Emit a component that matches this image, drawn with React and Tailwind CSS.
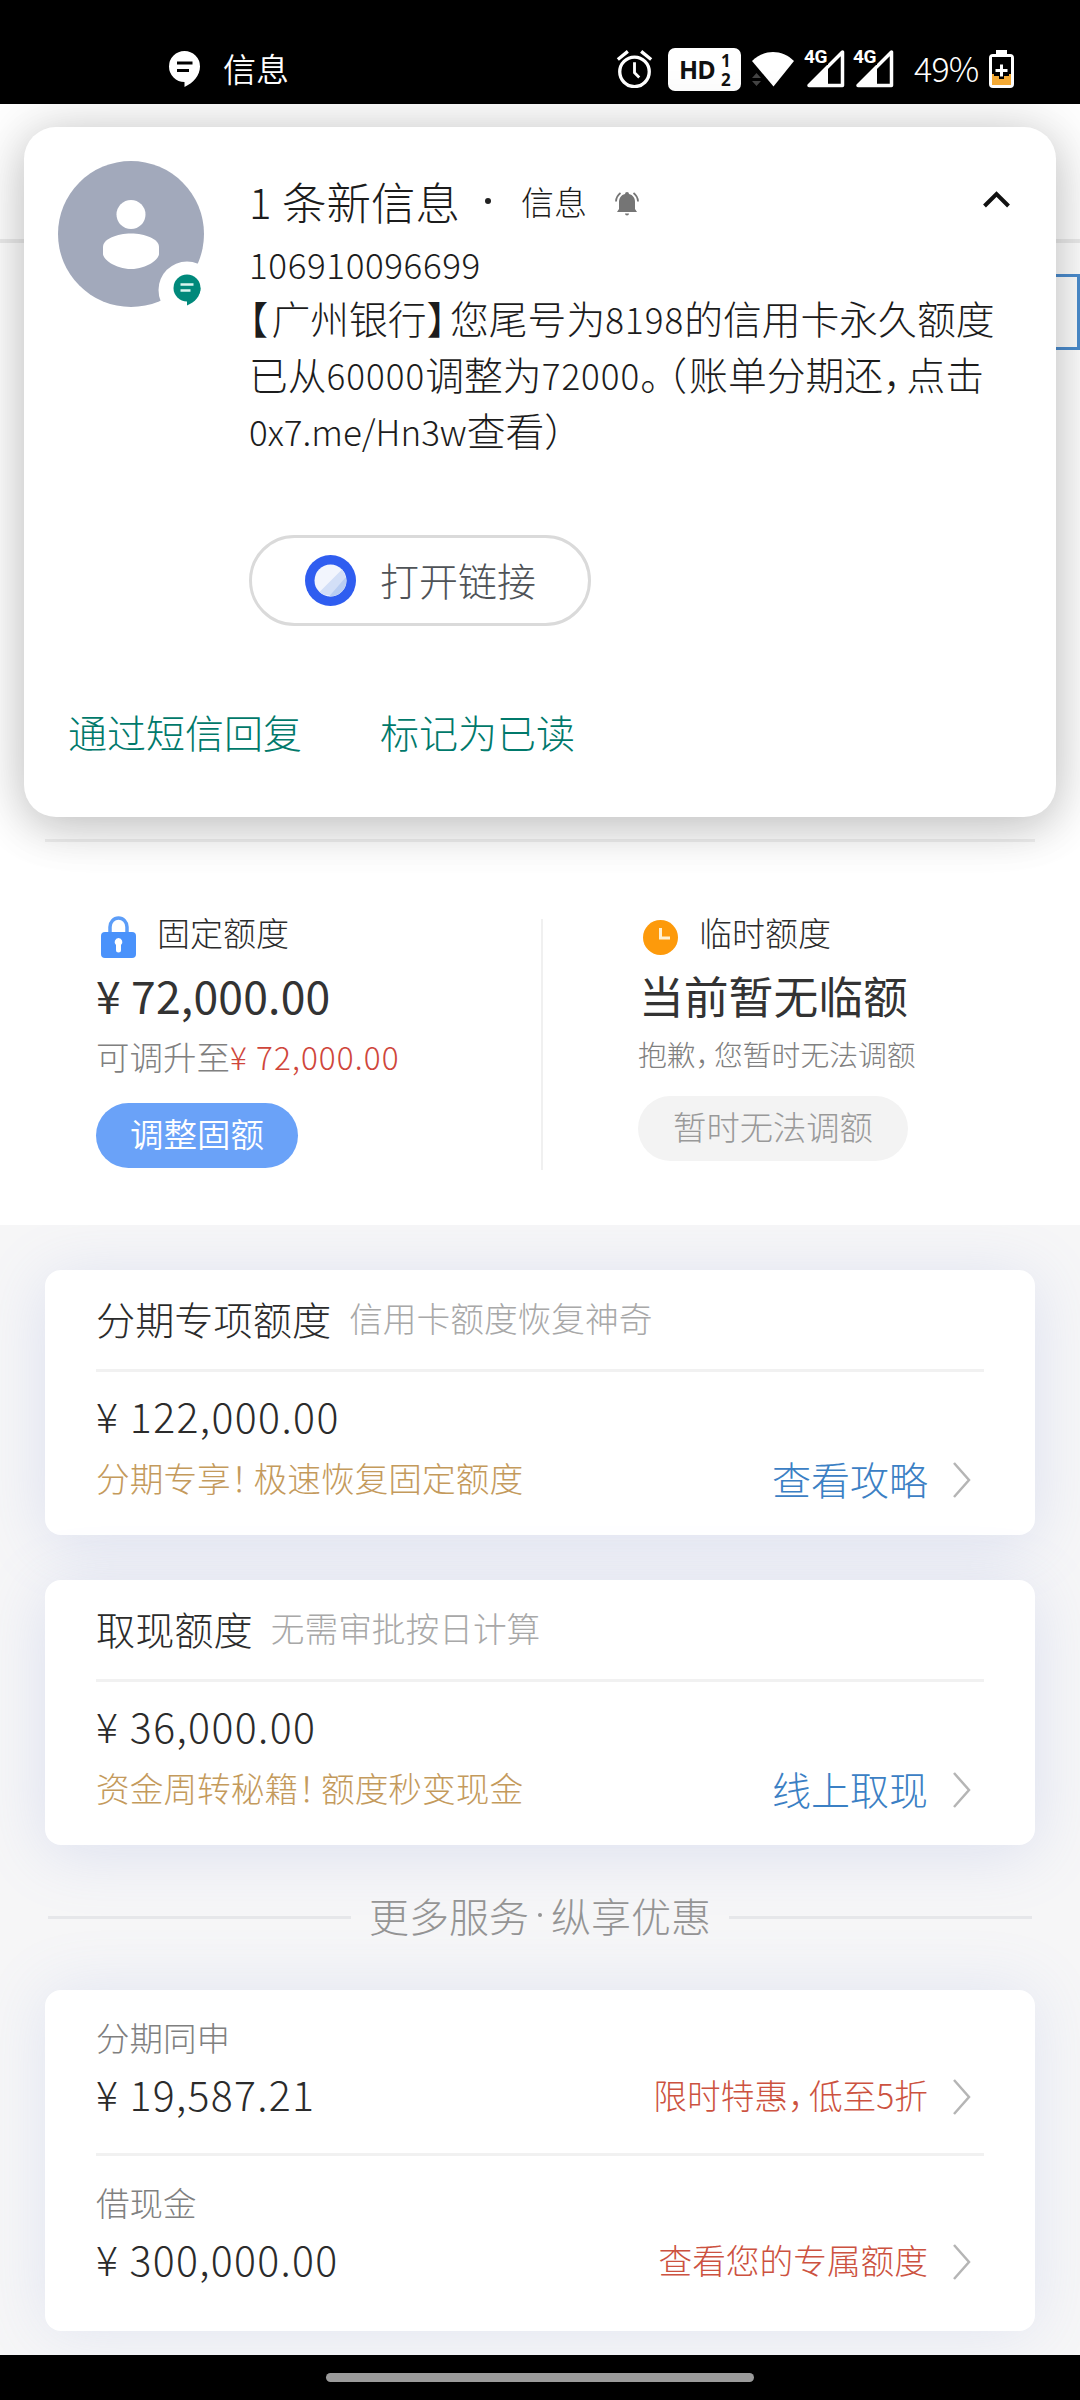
/**
 * App.jsx — credit limit page with an SMS heads-up notification on top
 */

const chevronPath = 'M2 1 L17 18 L2 35';

function ChatBubble({ className, lines }) {
  return (
    <svg className={className} viewBox="0 0 31 36">
      <path d="M15.5 0a15.5 15.5 0 0 1 15.5 15.5c0 9-7 16.500-15.500 20.500v-5A15.500 15.500 0 0 1 15.500 0z" fill="currentColor" />
      <path d="M8 12h15.500M8 19.500h12" stroke={lines} strokeWidth="3" />
    </svg>
  );
}

function SignalIcon() {
  return (
    <div className="relative h-[40px] w-[42px]">
      <svg className="h-full w-full" viewBox="0 0 42 40">
        <path d="M38.500 3v33.500H5z" fill="none" stroke="#fff" strokeWidth="3.500" strokeLinejoin="round" />
        <path d="M4 37.500 24 17v20.500z" fill="#fff" />
      </svg>
      <span className="absolute top-0 left-0 bg-black pr-px font-[Roboto] text-[19px] leading-[16px] font-bold tracking-[-0.500px] text-white">4G</span>
    </div>
  );
}

function StatusBar() {
  return (
    <header className="flex h-[104px] items-start bg-black pt-[48px] text-white">
      <ChatBubble className="mt-[3px] ml-[169px] h-[36px] w-[31px]" lines="#000" />
      <span className="ml-[23px] text-[33px] leading-[40px] font-[350]">信息</span>
      <svg className="ml-[327px] h-[40px] w-[37px] shrink-0" viewBox="0 0 38 42" fill="none" stroke="#fff" strokeWidth="3.500">
        <circle cx="19" cy="25" r="15.500" />
        <path d="M19 15v11l5 5" strokeWidth="3" />
        <path d="M1.500 12 12 3.500M26 3.500 36.500 12" />
      </svg>
      <div className="ml-[15px] flex h-[43px] w-[73px] items-center rounded-[7px] bg-white pl-[11px] font-['Open_Sans'] text-[25px] leading-none font-bold text-[#111]">
        <span className="w-[37px] tracking-[-1px]">HD</span>
        <span className="ml-[5px] flex flex-col text-[17px] leading-[19px]">
          <span>1</span>
          <span>2</span>
        </span>
      </div>
      <svg className="ml-[11px] h-[40px] w-[43px] shrink-0" viewBox="0 0 43 40">
        <path d="M0 13C12 1 30 1 42 13L21.500 38.500z" fill="#fff" />
        <path d="M0 30l4.500-5 4.500 5zM0 33h9l-4.500 5z" fill="#444" />
      </svg>
      <div className="mt-px ml-[9px] flex gap-[7px]">
        <SignalIcon />
        <SignalIcon />
      </div>
      <span className="mt-[-1px] ml-[19px] w-[67px] text-[34px] leading-[42px] font-light tracking-[-0.800px] whitespace-nowrap">49%</span>
      <svg className="mt-[2px] ml-[8px] h-[38px] w-[25px] shrink-0" viewBox="0 0 25 38">
        <path d="M7 0h11v4h3a4 4 0 0 1 4 4v26a4 4 0 0 1-4 4H4a4 4 0 0 1-4-4V8a4 4 0 0 1 4-4h3z" fill="#fff" />
        <path d="M3 7h19v17H3z" fill="#000" />
        <path d="M3 24h19v11H3z" fill="#f5ab35" />
        <path d="M9 14h7v4h4v8h-5v3h-5v-3H5v-8h4z" fill="#000" />
        <path d="M12.500 14.500v12M6.500 20.500h12" stroke="#fff" strokeWidth="3" />
      </svg>
    </header>
  );
}

function Avatar() {
  return (
    <svg className="h-[150px] w-[160px]" viewBox="0 0 160 150">
      <circle cx="73" cy="73" r="73" fill="#a2a9bb" />
      <circle cx="73" cy="53.500" r="14.500" fill="#fff" />
      <path d="M45 86c0-8 14-13.500 28-13.500S101 78 101 86v7c0 5-12 15-28 15S45 98 45 93z" fill="#fff" />
      <circle cx="129" cy="129" r="28.500" fill="#fff" />
      <circle cx="129" cy="127" r="13.500" fill="#00897b" />
      <path d="M129 139v5.500c8-3.500 13.500-9 13.500-18z" fill="#00897b" />
      <path d="M122.500 123.500h13M122.500 129.500h10" stroke="#d9f5f0" strokeWidth="2.500" />
    </svg>
  );
}

function Notification() {
  return (
    <section className="absolute top-[127px] left-[24px] h-[690px] w-[1032px] rounded-[32px] bg-white text-[#1c1c1c] shadow-[0_0_60px_rgba(0,0,0,0.160),0_14px_44px_rgba(0,0,0,0.140)]">
      <div className="flex">
        <div className="mt-[34px] ml-[34px] w-[191px] shrink-0">
          <Avatar />
        </div>
        <div className="w-[760px] pt-[44px]">
          <div className="flex h-[60px] items-center font-light whitespace-nowrap">
            <span className="w-[33px] text-[42px] leading-[60px]">1</span>
            <span className="text-[44.500px] leading-[60px]">条新信息</span>
            <span className="ml-[25px] size-[6px] rounded-full bg-[#212121]" />
            <span className="ml-[30px] text-[33px] leading-[60px]">信息</span>
            <svg className="mt-[5px] ml-[28px] h-[24px] w-[24px]" viewBox="0 0 24 24" fill="#757575">
              <path d="M12 0a2 2 0 0 1 2 2c4 1 6 4 6 8v7l2 3H2l2-3v-7c0-4 2-7 6-8a2 2 0 0 1 2-2zM10 21.500h4a2 2 0 0 1-4 0z" />
              <path d="M1 9.500C1 6 3 3 5.500 1M23 9.500C23 6 21 3 18.500 1" fill="none" stroke="#757575" strokeWidth="1.800" />
            </svg>
          </div>
          <p className="mt-[8px] text-[35px] leading-[50px] font-light tracking-[0.600px]">106910096699</p>
          <div className="text-[38.800px] font-light whitespace-nowrap">
            <p className="h-[56px] leading-[56px]">
              <span className="mr-[3px] [font-feature-settings:'halt']">【</span>广州银行<span className="mr-[4px] [font-feature-settings:'halt']">】</span>您尾号为<span className="text-[35px] leading-none tracking-[1px]">8198</span>的信用卡永久额度
            </p>
            <p className="h-[56px] leading-[56px]">
              已从<span className="text-[35px] leading-none tracking-[1px]">60000</span>调整为<span className="text-[35px] leading-none tracking-[1px]">72000</span>
              <span className="mr-[8px] [font-feature-settings:'halt']">。</span>
              <span className="mr-[2px] [font-feature-settings:'halt']">（</span>账单分期还<span className="mr-[4px] [font-feature-settings:'halt']">，</span>点击
            </p>
            <p className="h-[56px] leading-[56px]">
              <span className="text-[35px] leading-none">0x7.me/Hn3w</span>查看<span className="[font-feature-settings:'halt']">）</span>
            </p>
          </div>
          <button className="mt-[78px] flex h-[91px] w-[342px] items-center rounded-full border-3 border-[#dadada] pl-[53px]">
            <svg className="h-[51px] w-[51px]" viewBox="0 0 51 51">
              <circle cx="25.500" cy="25.500" r="25.500" fill="#2f5df0" />
              <circle cx="25.500" cy="25.500" r="16" fill="#f2f5fd" />
              <path d="M37 14.500A16 16 0 0 1 14.500 37z" fill="#d3dff7" />
              <path d="M41 22A16 16 0 0 1 24 41.400z" fill="#b9cdf2" />
            </svg>
            <span className="mb-[3px] ml-[24px] text-[39px] font-light text-[#4f5357]">打开链接</span>
          </button>
        </div>
        <svg className="mt-[64px] ml-[-26px] h-[17px] w-[27px] shrink-0" viewBox="0 0 27 17" fill="none" stroke="#111" strokeWidth="4">
          <path d="M1.500 15 13.500 3 25.500 15" />
        </svg>
      </div>
      <div className="mt-[75px] ml-[44px] flex gap-[78px] text-[39px] leading-[60px] font-light text-[#00796b]">
        <span>通过短信回复</span>
        <span>标记为已读</span>
      </div>
    </section>
  );
}

// What the notification leaves visible of the page header
function PageTop() {
  return (
    <div className="flex h-[738px] flex-col items-end">
      <div className="h-[139px] w-full border-b-4 border-[#ececec]" />
      <div className="mt-[31px] h-[76px] w-[120px] border-3 border-[#4c8dcf]" />
      <div className="mt-auto mr-[45px] h-[3px] w-[990px] bg-[#f0f0f0]" />
    </div>
  );
}

function Limits() {
  return (
    <section className="flex h-[383px] font-light text-[#2b2b2b]">
      <div className="w-[541px] pt-[73px] pl-[96px]">
        <div className="flex h-[36px] items-center">
          <svg className="mt-[8px] ml-[5px] h-[42px] w-[35px]" viewBox="0 0 35 42">
            <path d="M9 17v-6a8.500 9 0 0 1 17 0v6" fill="none" stroke="#5c9df8" strokeWidth="3.500" />
            <rect y="16" width="35" height="26" rx="4" fill="#4a92fb" />
            <path d="M17.500 22a4 4 0 0 1 2.500 7v5a2.500 2.500 0 0 1-5 0v-5a4 4 0 0 1 2.500-7z" fill="#fff" />
          </svg>
          <span className="ml-[21px] text-[33px]">固定额度</span>
        </div>
        <p className="mt-[17px] text-[44.500px] leading-[54px] font-normal tracking-[0.200px] text-[#333]">¥ 72,000.00</p>
        <p className="mt-[18px] text-[33.500px] leading-[32px] whitespace-nowrap text-[#808080]">
          可调升至<span className="text-[31.500px] tracking-[1.100px] text-[#cf463b]">¥ 72,000.00</span>
        </p>
        <button className="mt-[31px] h-[65px] w-[202px] rounded-full bg-[#6aa2f8] pb-[5px] text-[33.500px] leading-[58px] font-[350] text-white">调整固额</button>
      </div>
      <div className="mt-[77px] h-[251px] w-[2px] bg-[#f0f0f0]" />
      <div className="pt-[73px] pl-[95px]">
        <div className="flex h-[36px] items-center">
          <svg className="mt-[8px] ml-[5px] h-[35px] w-[35px]" viewBox="0 0 35 35">
            <circle cx="17.500" cy="17.500" r="17.500" fill="#fd9a0b" />
            <path d="M17.500 8v10h9.500" fill="none" stroke="#fff0d0" strokeWidth="3" />
          </svg>
          <span className="ml-[21px] text-[33px]">临时额度</span>
        </div>
        <p className="mt-[17px] ml-[1px] text-[44.800px] leading-[54px] font-normal text-[#333]">当前暂无临额</p>
        <p className="mt-[16px] text-[28.800px] leading-[32px] whitespace-nowrap text-[#808080]">
          抱歉<span className="mr-[4px] [font-feature-settings:'halt']">，</span>您暂时无法调额
        </p>
        <button className="mt-[26px] h-[65px] w-[270px] rounded-full bg-[#f3f3f3] pb-[5px] text-[33.300px] leading-[58px] text-[#999]">暂时无法调额</button>
      </div>
    </section>
  );
}

function Chevron() {
  return (
    <svg className="mt-[2px] ml-[24px] h-[36px] w-[19px]" viewBox="0 0 19 36" fill="none" stroke="#b5b5b5" strokeWidth="2.500">
      <path d={chevronPath} />
    </svg>
  );
}

function LimitCard({ title, note, amount, tip, action }) {
  return (
    <article className="h-[265px] rounded-[16px] bg-white px-[51px] font-light shadow-[0_8px_64px_rgba(120,140,215,0.200)]">
      <div className="flex h-[102px] items-center border-b-3 border-[#f1f1f1] pb-[3px]">
        <span className="text-[39.200px] text-[#2b2b2b]">{title}</span>
        <span className="ml-[18px] text-[33.700px] text-[#a8a8a8]">{note}</span>
      </div>
      <p className="mt-[16px] text-[41px] leading-[54px] tracking-[1.400px] text-[#2b2b2b]">{amount}</p>
      <div className="mt-[9px] flex h-[56px] items-center pr-[13px]">
        <span className="mb-[2px] text-[33.700px] text-[#c49a5c]">
          {tip[0]}
          <span className="mr-[6px] [font-feature-settings:'halt']">！</span>
          {tip[1]}
        </span>
        <span className="mb-[2px] ml-auto text-[39px] text-[#3b80c4]">{action}</span>
        <Chevron />
      </div>
    </article>
  );
}

function ServiceRow({ label, amount, children }) {
  return (
    <div className="font-light">
      <p className="text-[33.500px] leading-[40px] text-[#808080]">{label}</p>
      <div className="mt-[9px] flex h-[56px] items-center pr-[13px]">
        <span className="mb-[2px] text-[41px] leading-[54px] tracking-[1.300px] text-[#2b2b2b]">{amount}</span>
        <span className="mt-[2px] ml-auto text-[33.700px] text-[#cc5240]">{children}</span>
        <div className="pt-[4px]">
          <Chevron />
        </div>
      </div>
    </div>
  );
}

export default function App() {
  return (
    <div className="relative flex h-[2400px] w-[1080px] flex-col overflow-hidden bg-white font-['Noto_Sans_CJK_SC',sans-serif]">
      <StatusBar />
      <PageTop />
      <Limits />
      <main className="flex h-[1130px] flex-col overflow-hidden bg-[#f6f6f7] px-[45px] pt-[45px]">
        <LimitCard title="分期专项额度" note="信用卡额度恢复神奇" amount="¥ 122,000.00" tip={['分期专享', '极速恢复固定额度']} action="查看攻略" />
        <div className="h-[45px]" />
        <LimitCard title="取现额度" note="无需审批按日计算" amount="¥ 36,000.00" tip={['资金周转秘籍', '额度秒变现金']} action="线上取现" />
        <div className="flex h-[145px] items-center justify-between px-[3px] font-light text-[#949494]">
          <div className="h-[3px] w-[303px] bg-[#e6e7ea]" />
          <span className="mb-[6px] flex items-center text-[40px]">
            更多服务<span className="mx-[9px] size-[4px] rounded-full bg-[#949494]" />纵享优惠
          </span>
          <div className="h-[3px] w-[303px] bg-[#e6e7ea]" />
        </div>
        <article className="h-[341px] rounded-[16px] bg-white px-[51px] pt-[27px] shadow-[0_0_64px_rgba(120,140,215,0.160)]">
          <ServiceRow label="分期同申" amount="¥ 19,587.21">
            限时特惠<span className="mr-[4px] [font-feature-settings:'halt']">，</span>低至5折
          </ServiceRow>
          <div className="mt-[31px] mb-[26px] h-[3px] bg-[#f1f1f1]" />
          <ServiceRow label="借现金" amount="¥ 300,000.00">查看您的专属额度</ServiceRow>
        </article>
      </main>
      <footer className="flex h-[45px] justify-center bg-black pt-[18px]">
        <div className="h-[9px] w-[428px] rounded-full bg-[#9b9b9b]" />
      </footer>
      <Notification />
    </div>
  );
}
